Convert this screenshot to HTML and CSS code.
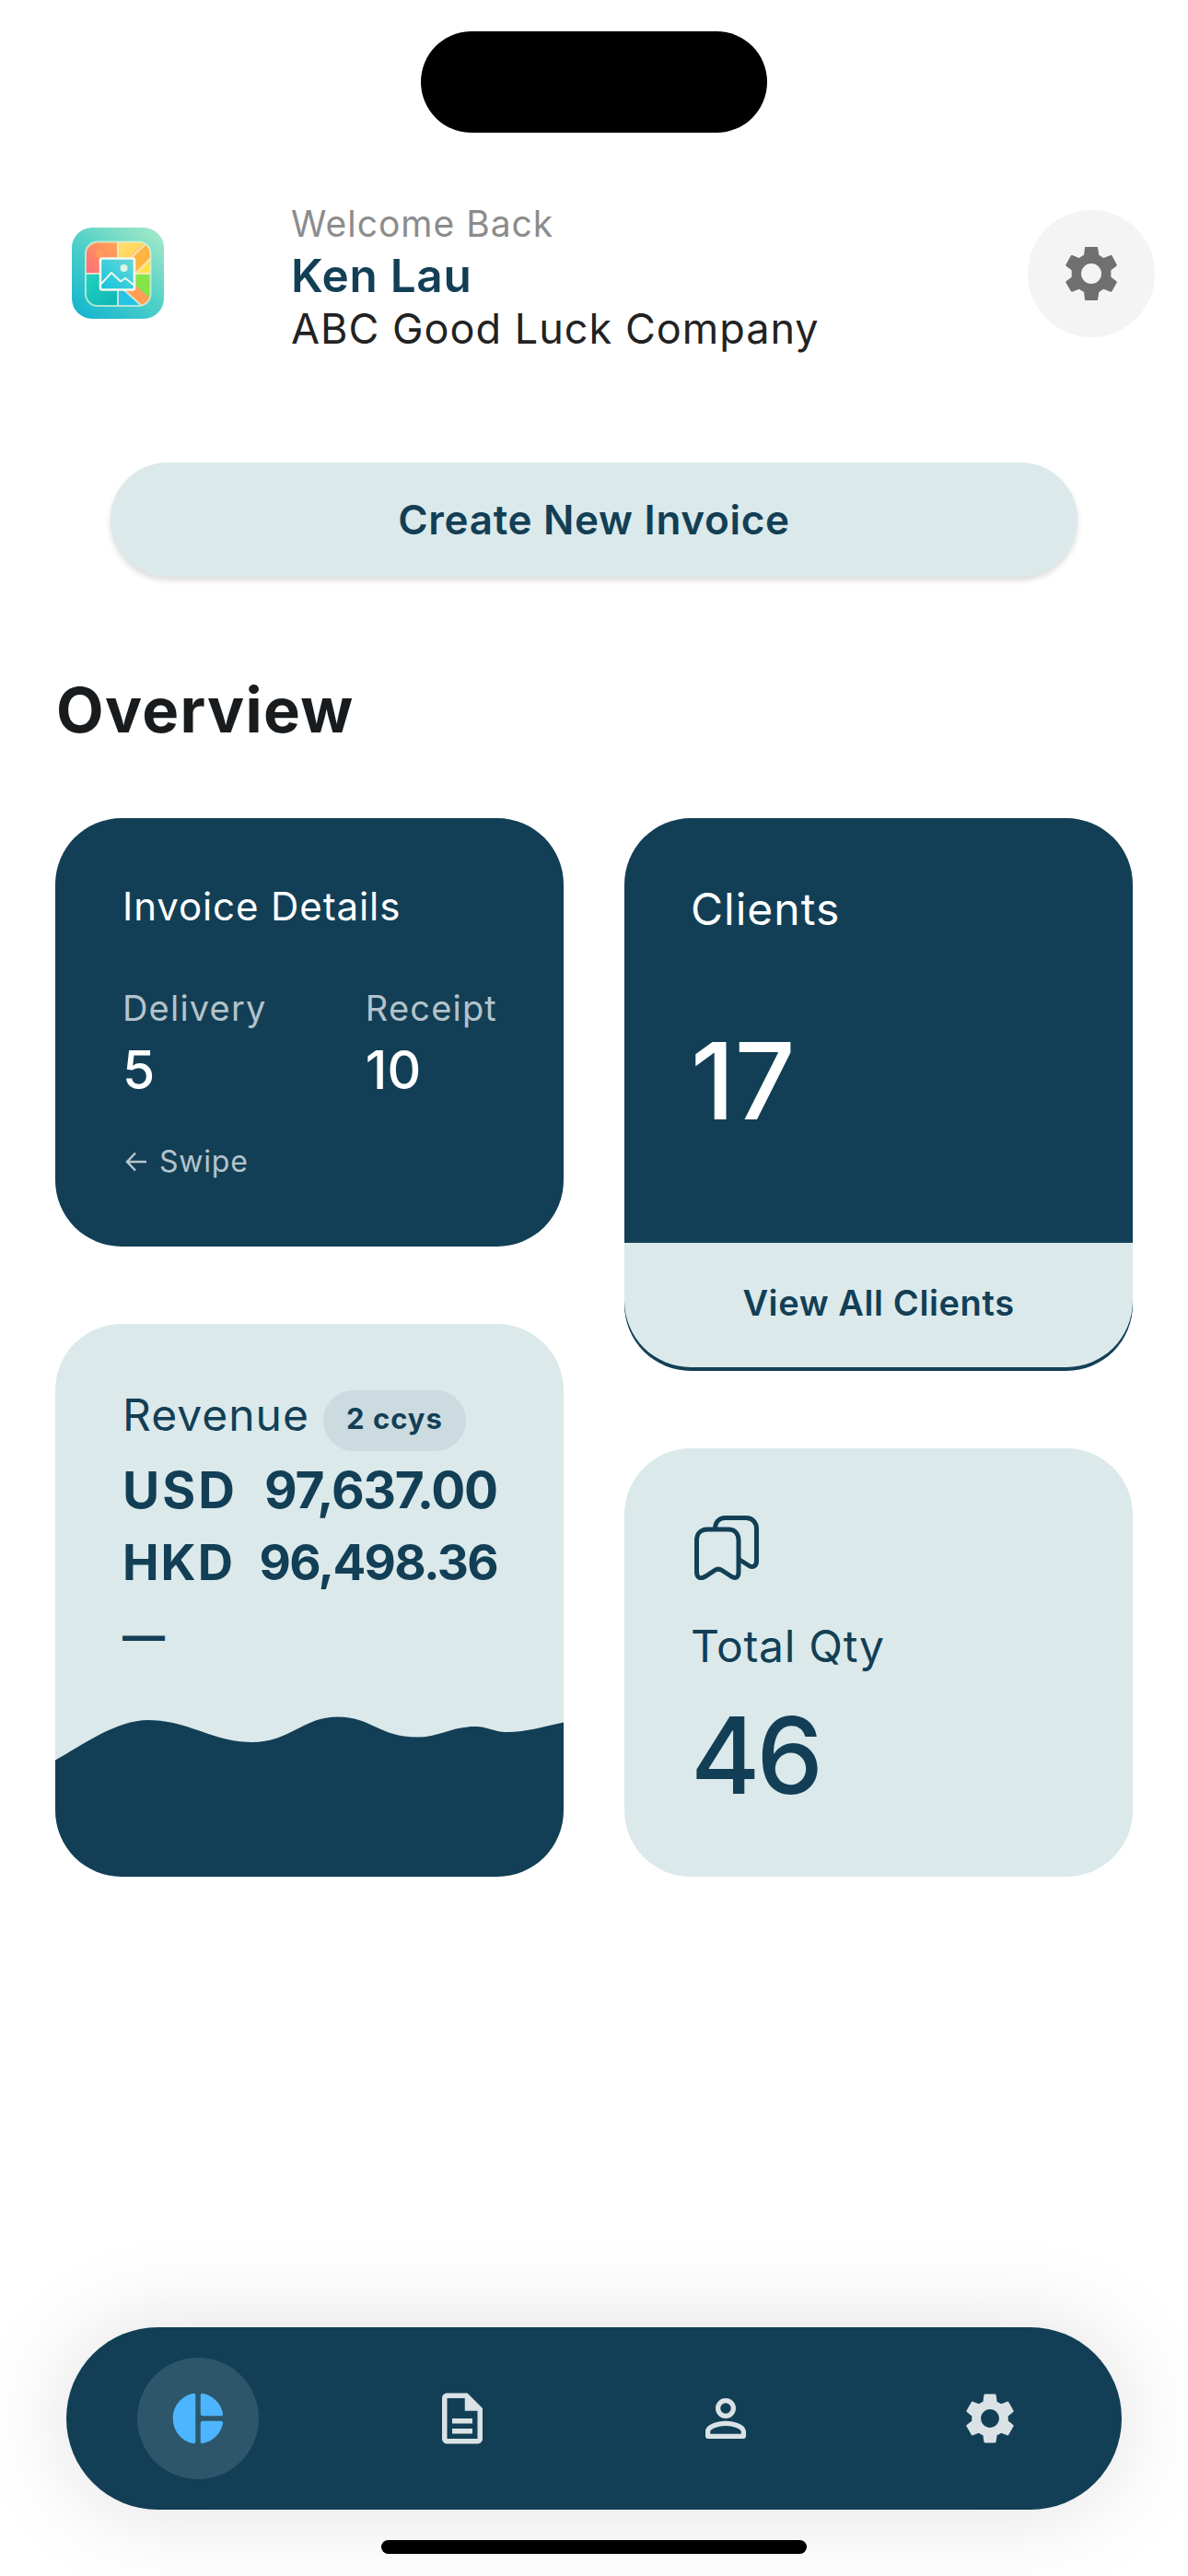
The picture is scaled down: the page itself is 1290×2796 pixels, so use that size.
FILE: index.html
```html
<!DOCTYPE html>
<html lang="en">

<head>
  <meta charset="UTF-8">
  <meta name="viewport" content="width=device-width, initial-scale=1.0">
  <title>Overview</title>
  <link rel="stylesheet" href="styles.css">
</head>

<body>
  <div class="island"></div>

  <header class="header">
    <svg class="logo" viewBox="0 0 100 99">
      <defs>
        <linearGradient id="logo-bg" x1="0.1" y1="1" x2="0.9" y2="0">
          <stop offset="0" stop-color="#12b5cf" />
          <stop offset="0.5" stop-color="#50d0c8" />
          <stop offset="1" stop-color="#a4e8c8" />
        </linearGradient>
        <linearGradient id="logo-red" x1="0" y1="1" x2="1" y2="0">
          <stop offset="0" stop-color="#ff6b80" />
          <stop offset="1" stop-color="#ffa94e" />
        </linearGradient>
        <linearGradient id="logo-yellow" x1="0" y1="0" x2="1" y2="1">
          <stop offset="0" stop-color="#ffe070" />
          <stop offset="1" stop-color="#ffc845" />
        </linearGradient>
        <linearGradient id="logo-teal" x1="0" y1="0" x2="1" y2="1">
          <stop offset="0" stop-color="#1fd3bd" />
          <stop offset="1" stop-color="#0fb5b5" />
        </linearGradient>
        <linearGradient id="logo-photo" x1="0" y1="1" x2="1" y2="0">
          <stop offset="0" stop-color="#10c3e0" />
          <stop offset="1" stop-color="#6cd8d8" />
        </linearGradient>
        <clipPath id="logo-clip">
          <rect x="15" y="15.5" width="70.5" height="69.5" rx="13" />
        </clipPath>
      </defs>
      <rect width="100" height="99" rx="22" fill="url(#logo-bg)" />
      <g clip-path="url(#logo-clip)">
        <rect x="14" y="14" width="36" height="36" fill="url(#logo-red)" />
        <circle cx="31" cy="28" r="5" fill="#ff9a5c" />
        <rect x="50" y="14" width="37" height="36" fill="url(#logo-yellow)" />
        <path d="M62 33 82 14h6v18L70 49z" fill="#ffb340" />
        <path d="M70 49 88 31v19z" fill="#ffe04d" />
        <rect x="14" y="50" width="36" height="36" fill="url(#logo-teal)" />
        <path d="M50 50h38v36H50z" fill="#27c3e6" />
        <path d="M68 50h20v29L68 62z" fill="#84e548" />
        <path d="M58 68 68 62 87 78v8H77z" fill="#ff9f55" />
        <path d="M50 14v72M14 50h73M64 33 82 16M70 49 86 33M57 68 77 86" fill="none" stroke="#f3efcf" stroke-opacity=".8" stroke-width="2" />
      </g>
      <rect x="15" y="15.5" width="70.5" height="69.5" rx="13" fill="none" stroke="#d8f3dc" stroke-opacity=".75" stroke-width="2" />
      <rect x="31" y="33.5" width="37" height="34" rx="2" fill="url(#logo-photo)" stroke="#f5f8ea" stroke-width="2.6" />
      <circle cx="56.5" cy="44" r="4" fill="#dff4e2" />
      <path d="M32 61 43 49 53 58.5 58 55 67 62" fill="none" stroke="#eef9ec" stroke-width="2" stroke-linejoin="round" />
    </svg>
    <div class="user">
      <p class="user-welcome">Welcome Back</p>
      <p class="user-name">Ken Lau</p>
      <p class="user-company">ABC Good Luck Company</p>
    </div>
    <button class="settings">
      <svg class="settings-icon" viewBox="0 0 168 174">
        <path fill-rule="evenodd" d="M63 2q0-2 2-2h38q2 0 2 2l4 24 15 10 23-9q3-1 4 1l16 30q1 2-1 4l-18 14v22l18 14q2 2 1 4l-16 29q-1 2-4 1l-23-9-15 10-4 25q0 2-2 2H65q-2 0-2-2l-3-25-16-10-22 9q-2 1-4-1L1 116q-1-2 1-4l18-14V76L2 62q-2-2-1-4l17-30q2-2 4-1l22 9 16-10zM84 54a33 33 0 1 0 0 66 33 33 0 0 0 0-66z" />
      </svg>
    </button>
  </header>

  <button class="create-btn">Create New Invoice</button>

  <h1 class="title">Overview</h1>

  <main class="overview">
    <div class="column">
      <section class="card card-dark invoice">
        <h2 class="invoice-title">Invoice Details</h2>
        <div class="invoice-row">
          <div>
            <p class="invoice-label">Delivery</p>
            <p class="invoice-num">5</p>
          </div>
          <div>
            <p class="invoice-label">Receipt</p>
            <p class="invoice-num">10</p>
          </div>
        </div>
        <p class="swipe">
          <svg class="swipe-arrow" viewBox="0 0 24 22">
            <path d="M23 11H2M11 1.500 2 11l9 9.500" />
          </svg>
          <span>Swipe</span>
        </p>
      </section>

      <section class="card card-light revenue">
        <div class="revenue-head">
          <h2 class="card-title">Revenue</h2>
          <span class="badge">2 ccys</span>
        </div>
        <div class="amount amount-usd"><span>USD</span><span class="amount-value">97,637.00</span></div>
        <div class="amount amount-hkd"><span>HKD</span><span class="amount-value">96,498.36</span></div>
        <div class="amount-none">—</div>
        <svg class="wave" viewBox="0 0 552 174">
          <path d="M0 47.500C30 31 66 4 101 4C144 4 172 28 213 28C256 28 268 .5 307 .5C343 .5 352 22.500 393 22.500C417 22.500 430 11 455 11C472 11 474 17 491 17C512 17 530 11 552 6.500V174H0z" />
        </svg>
      </section>
    </div>

    <div class="column">
      <section class="card card-dark clients">
        <h2 class="card-title">Clients</h2>
        <p class="big-num">17</p>
        <a class="clients-link">View All Clients</a>
      </section>

      <section class="card card-light qty">
        <svg class="qty-icon" viewBox="0 0 70 70">
          <path d="M14 15h23c7 0 11 5 11 12v34c0 6-3 8-8 5l-10-6.500c-3-2-5-2-8 0L12 66c-6 3.500-9.500 1-9.500-5V27c0-7 4-12 11.500-12z" />
          <path d="M22.500 14c0-7 4.500-11.500 11-11.500H56c7 0 11.500 5 11.500 12V49c0 6-4 8-8 5.500L50 48.500" />
        </svg>
        <h2 class="card-title">Total Qty</h2>
        <p class="big-num">46</p>
      </section>
    </div>
  </main>

  <nav class="tabbar">
    <a class="tab">
      <span class="tab-active">
        <svg class="tab-icon" viewBox="0 0 24 24">
          <path d="M11 2.850v18.300c0 .55-.45.85-1 .7C5.400 20.900 2.100 16.900 2.100 12S5.400 3.100 10 2.150c.55-.15 1 .15 1 .7zM13 2.850V10.200c0 .45.35.8.8.8h7.300c.5 0 .85-.45.75-.95-.8-4-3.850-7.100-7.850-7.900-.55-.1-1 .2-1 .7zM13 21.150V13.800c0-.45.35-.8.8-.8h7.300c.5 0 .85.45.75.95-.8 4-3.850 7.100-7.850 7.900-.55.1-1-.2-1-.7z" />
        </svg>
      </span>
    </a>
    <a class="tab">
      <svg class="tab-icon" viewBox="0 0 24 24">
        <path d="M8 16h8v2H8zm0-4h8v2H8zm6-10H6c-1.100 0-2 .9-2 2v16c0 1.100.89 2 1.990 2H18c1.100 0 2-.9 2-2V8l-6-6zm4 18H6V4h7v5h5v11z" />
      </svg>
    </a>
    <a class="tab">
      <svg class="tab-icon" viewBox="0 0 24 24">
        <path fill-rule="evenodd" d="M12 4a4 4 0 1 0 0 8 4 4 0 0 0 0-8zm0 1.900a2.100 2.100 0 1 1 0 4.200 2.100 2.100 0 0 1 0-4.200zM12 13c-3.500 0-8 1.450-8 4.200V19c0 .55.45 1 1 1h14c.55 0 1-.45 1-1v-1.800C20 14.450 15.500 13 12 13zm0 1.900c2.800 0 6.100 1.250 6.100 2.300v.9H5.900v-.9c0-1.050 3.300-2.300 6.100-2.300z" />
      </svg>
    </a>
    <a class="tab">
      <svg class="tab-icon" viewBox="0 0 24 24">
        <path d="M19.140 12.940c.04-.3.06-.61.06-.94 0-.32-.02-.64-.07-.94l2.030-1.580c.18-.14.23-.41.12-.61l-1.920-3.320c-.12-.22-.37-.29-.59-.22l-2.390.96c-.5-.38-1.030-.7-1.620-.94l-.36-2.540c-.04-.24-.24-.41-.48-.41h-3.840c-.24 0-.43.17-.47.41l-.36 2.540c-.59.24-1.130.57-1.620.94l-2.390-.96c-.22-.08-.47 0-.59.22L2.740 8.870c-.12.21-.08.47.12.61l2.030 1.580c-.05.3-.09.63-.09.94s.02.64.07.94l-2.030 1.580c-.18.14-.23.41-.12.61l1.920 3.320c.12.22.37.29.59.22l2.390-.96c.5.38 1.030.7 1.620.94l.36 2.540c.05.24.24.41.48.41h3.840c.24 0 .44-.17.47-.41l.36-2.540c.59-.24 1.130-.56 1.620-.94l2.390.96c.22.08.47 0 .59-.22l1.920-3.320c.12-.22.07-.47-.12-.61l-2.010-1.580zM12 15.600c-1.980 0-3.600-1.620-3.600-3.600s1.620-3.600 3.600-3.600 3.600 1.620 3.600 3.600-1.620 3.600-3.600 3.600z" />
      </svg>
    </a>
  </nav>
  <div class="home-indicator"></div>
</body>

</html>
```
FILE: styles.css
```css
* {
  margin: 0;
  padding: 0;
  box-sizing: border-box;
}

body {
  width: 1290px;
  height: 2796px;
  display: flex;
  flex-direction: column;
  align-items: center;
  overflow: hidden;
  background-color: #fff;
  color: #123f56;
  font-family: Inter, "Liberation Sans", sans-serif;
}

button {
  border: none;
  font-family: inherit;
  cursor: pointer;
}

h1,
h2,
p,
span,
a {
  white-space: nowrap;
}

.island {
  flex: none;
  width: 376px;
  height: 110px;
  margin-top: 34px;
  border-radius: 55px;
  background-color: #000;
}

.header {
  width: 100%;
  height: 168px;
  margin-top: 72px;
  padding: 0 36px 0 78px;
  display: flex;
  align-items: flex-start;
}

.logo {
  width: 100px;
  height: 99px;
  margin-top: 31px;
}

.user {
  flex: 1;
  margin-left: 138px;
}

.user-welcome {
  font-size: 39px;
  line-height: 53px;
  letter-spacing: 1px;
  color: #8c8c8c;
}

.user-name {
  font-size: 49.5px;
  line-height: 61px;
  font-weight: 600;
  letter-spacing: 0.7px;
}

.user-company {
  font-size: 45px;
  line-height: 54px;
  letter-spacing: 1px;
  color: #222;
}

.settings {
  width: 138px;
  height: 138px;
  margin-top: 12px;
  display: flex;
  align-items: center;
  justify-content: center;
  border-radius: 50%;
  background-color: #f4f4f4;
}

.settings-icon {
  width: 56px;
  height: 58px;
  fill: #707070;
}

.create-btn {
  flex: none;
  width: 1050px;
  height: 124px;
  margin-top: 118px;
  border-radius: 62px;
  background-color: #dbe9ea;
  box-shadow: 0 4px 6px rgba(0, 0, 0, .14);
  color: #123f56;
  font-size: 44px;
  font-weight: 600;
  letter-spacing: 0.7px;
}

.title {
  align-self: flex-start;
  margin: 105px 0 0 61px;
  font-size: 67px;
  line-height: 80px;
  font-weight: 700;
  letter-spacing: 1.3px;
  color: #191c1e;
}

.overview {
  width: 1170px;
  margin-top: 77px;
  display: flex;
  gap: 66px;
}

.column {
  flex: 1;
  display: flex;
  flex-direction: column;
  gap: 84px;
}

.card {
  position: relative;
  padding: 70px 72px 0;
  border-radius: 72px;
  overflow: hidden;
}

.card-dark {
  background-color: #123f56;
  color: #fff;
}

.card-light {
  background-color: #dbe9ea;
}

.card-title {
  font-size: 48px;
  line-height: 58px;
  font-weight: 400;
  letter-spacing: 1px;
}

.big-num {
  font-size: 115px;
  line-height: 142px;
  font-weight: 500;
}

.invoice {
  height: 465px;
  padding-left: 73px;
}

.invoice-title {
  font-size: 42px;
  line-height: 51px;
  font-weight: 400;
  letter-spacing: 0.9px;
}

.invoice-row {
  margin-top: 62px;
  display: flex;
  justify-content: space-between;
}

.invoice-label {
  font-size: 38px;
  line-height: 46px;
  letter-spacing: 1.2px;
  color: rgba(255, 255, 255, .7);
}

.invoice-num {
  margin-top: 11px;
  font-size: 57px;
  line-height: 68px;
  font-weight: 500;
}

.swipe {
  margin-top: 45px;
  display: flex;
  align-items: center;
  gap: 13px;
  font-size: 32px;
  line-height: 40px;
  letter-spacing: 0.8px;
  color: rgba(255, 255, 255, .7);
}

.swipe-arrow {
  width: 24px;
  height: 22px;
  margin-left: 3px;
  fill: none;
  stroke: currentColor;
  stroke-width: 2.5;
}

.revenue {
  height: 600px;
  padding-left: 73px;
}

.revenue-head {
  height: 72px;
  display: flex;
  align-items: flex-start;
}

.badge {
  width: 155px;
  height: 66px;
  margin: 2px 0 0 15px;
  border-radius: 33px;
  background-color: #ccdbdf;
  text-align: center;
  font-size: 31px;
  line-height: 62px;
  font-weight: 700;
  letter-spacing: 1px;
}

.amount {
  position: relative;
  z-index: 1;
  display: flex;
  justify-content: space-between;
  font-weight: 700;
}

.amount-usd {
  font-size: 55px;
  line-height: 77px;
  letter-spacing: 3px;
}

.amount-usd .amount-value {
  letter-spacing: -1.2px;
}

.amount-hkd {
  font-size: 53px;
  line-height: 80px;
  letter-spacing: 2px;
}

.amount-hkd .amount-value {
  letter-spacing: -1.7px;
}

.amount-none {
  font-size: 46px;
  line-height: 78px;
  font-weight: 700;
}

.wave {
  position: absolute;
  left: 0;
  bottom: 0;
  width: 552px;
  height: 174px;
  fill: #123f56;
}

.clients {
  height: 600px;
  padding-bottom: 4px;
  display: flex;
  flex-direction: column;
}

.clients .big-num {
  margin-top: 87px;
}

.clients-link {
  height: 135px;
  margin: auto -72px 0;
  border-radius: 0 0 72px 72px;
  background-color: #dbe9ea;
  color: #123f56;
  text-align: center;
  font-size: 38px;
  line-height: 131px;
  font-weight: 600;
  letter-spacing: 0.6px;
}

.qty {
  height: 465px;
}

.qty-icon {
  display: block;
  width: 70px;
  height: 70px;
  margin: 3px 0 43px 4px;
  fill: none;
  stroke: #123f56;
  stroke-width: 5;
  stroke-linecap: round;
}

.qty .card-title {
  letter-spacing: 0.7px;
}

.qty .big-num {
  margin-top: 19px;
  letter-spacing: -4px;
}

.tabbar {
  flex: none;
  width: 1146px;
  height: 198px;
  margin-top: auto;
  display: flex;
  border-radius: 99px;
  background-color: #123f56;
  box-shadow: 0 0 105px rgba(0, 0, 0, .13);
}

.tab {
  flex: 1;
  display: flex;
  align-items: center;
  justify-content: center;
}

.tab-active {
  width: 132px;
  height: 132px;
  display: flex;
  align-items: center;
  justify-content: center;
  border-radius: 50%;
  background-color: #2d566a;
}

.tab-icon {
  width: 66px;
  height: 66px;
  fill: #dbe2e6;
}

.tab-active .tab-icon {
  fill: #4db5ff;
}

.home-indicator {
  position: relative;
  flex: none;
  width: 462px;
  height: 15px;
  margin: 33px 0 24px;
  border-radius: 8px;
  background-color: #000;
}
```
